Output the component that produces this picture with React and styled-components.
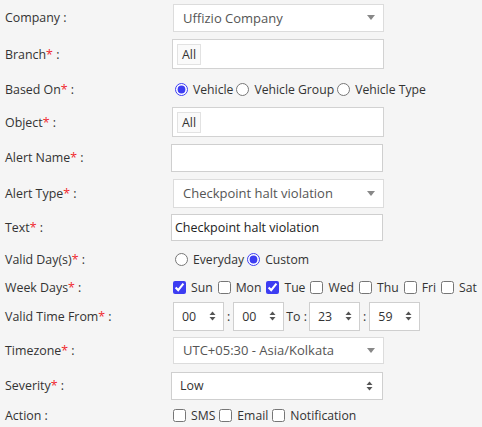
import React from 'react';
import styled, { createGlobalStyle } from 'styled-components';

const GlobalStyle = createGlobalStyle`
  html, body {
    margin: 0;
    padding: 0;
    background: #f5f5f5;
    font-family: "Open Sans", "Noto Sans", sans-serif;
    font-size: 12.4px;
    color: #333;
  }
`;

const Form = styled.div`
  display: flex;
  flex-direction: column;
  padding-left: 5px;
  width: 477px;
`;

const Row = styled.div`
  display: flex;
  align-items: center;
  height: ${p => p.h}px;
`;

const Label = styled.div`
  width: ${p => p.w || 167}px;
  flex-shrink: 0;
  color: #333;
  white-space: nowrap;
`;

const Star = styled.span`
  color: #f0282d;
`;

const Field = styled.div`
  display: flex;
  align-items: center;
  margin-left: ${p => p.ml || 0}px;
`;

const Select2 = styled.div`
  box-sizing: border-box;
  width: 211px;
  height: ${p => p.h || 28}px;
  margin-left: 1px;
  background: #fff;
  border: 1px solid #dcdcdc;
  display: flex;
  align-items: center;
  justify-content: space-between;
  padding: 0 8px 0 9px;
  color: #555;
  font-size: 13px;
`;

const Caret = styled.span`
  width: 0;
  height: 0;
  border-left: 4px solid transparent;
  border-right: 4px solid transparent;
  border-top: 5px solid #888;
`;

const TagBox = styled.div`
  box-sizing: border-box;
  width: 212px;
  height: 30px;
  background: #fff;
  border: 1px solid #d2d2d2;
  display: flex;
  align-items: center;
  padding-left: 4px;
`;

const Tag = styled.span`
  border: 1px solid #e2e2e2;
  background: #fafafa;
  padding: 2px 4px;
  color: #333;
  line-height: 15px;
`;

const TextInput = styled.div`
  box-sizing: border-box;
  width: 212px;
  height: ${p => p.h || 28}px;
  background: #fff;
  border: 1px solid #cfcfcf;
  display: flex;
  align-items: center;
  padding-left: 3px;
  color: #222;
  font-size: 12.5px;
`;

const NativeSelect = styled.div`
  box-sizing: border-box;
  width: ${p => p.w || 212}px;
  height: ${p => p.h || 28}px;
  background: #fff;
  border: 1px solid #cfcfcf;
  display: flex;
  align-items: center;
  justify-content: space-between;
  padding: 0 ${p => p.pr || 7}px 0 8px;
  color: #333;
`;

const Choice = styled.label`
  display: flex;
  align-items: center;
  color: #333;
  font-size: 12.2px;
  margin-right: ${p => p.gap || 4}px;
  white-space: nowrap;

  input {
    margin: 0 5px 0 0;
    width: 13px;
    height: 13px;
    accent-color: #3d3df2;
  }
`;

const Sep = styled.span`
  margin: 0 ${p => p.m}px;
  color: #333;
`;

const Updown = () => (
  <svg width="7" height="10" viewBox="0 0 7 10">
    <path d="M3.5 0.5 L6.5 4 L0.5 4 Z" fill="#555" />
    <path d="M3.5 9.5 L6.5 6 L0.5 6 Z" fill="#555" />
  </svg>
);

const Spinner = ({ value }) => (
  <NativeSelect w={51} h={29} pr={7}>
    <span>{value}</span>
    <Updown />
  </NativeSelect>
);

const req = name => (
  <>
    {name}
    <Star>*</Star> :
  </>
);

export default function App() {
  return (
    <>
      <GlobalStyle />
      <Form>
        <Row h={35}>
          <Label>Company :</Label>
          <Select2>
            <span>Uffizio Company</span>
            <Caret />
          </Select2>
        </Row>
        <Row h={38}>
          <Label>{req('Branch')}</Label>
          <TagBox><Tag>All</Tag></TagBox>
        </Row>
        <Row h={32}>
          <Label>{req('Based On')}</Label>
          <Field ml={3}>
            <Choice gap={3}><input type="radio" name="b" defaultChecked />Vehicle</Choice>
            <Choice gap={3}><input type="radio" name="b" />Vehicle Group</Choice>
            <Choice gap={3}><input type="radio" name="b" />Vehicle Type</Choice>
          </Field>
        </Row>
        <Row h={34}>
          <Label>{req('Object')}</Label>
          <TagBox><Tag>All</Tag></TagBox>
        </Row>
        <Row h={37}>
          <Label w={166}>{req('Alert Name')}</Label>
          <TextInput />
        </Row>
        <Row h={34}>
          <Label>{req('Alert Type')}</Label>
          <Select2 h={29}>
            <span>Checkpoint halt violation</span>
            <Caret />
          </Select2>
        </Row>
        <Row h={35}>
          <Label w={166}>{req('Text')}</Label>
          <TextInput h={27}>Checkpoint halt violation</TextInput>
        </Row>
        <Row h={29}>
          <Label>{req('Valid Day(s)')}</Label>
          <Field ml={3}>
            <Choice gap={3}><input type="radio" name="d" />Everyday</Choice>
            <Choice gap={3}><input type="radio" name="d" defaultChecked />Custom</Choice>
          </Field>
        </Row>
        <Row h={26}>
          <Label>{req('Week Days')}</Label>
          <Field ml={1}>
            {['Sun', 'Mon', 'Tue', 'Wed', 'Thu', 'Fri', 'Sat'].map(d => (
              <Choice key={d} gap={5}>
                <input type="checkbox" defaultChecked={d === 'Sun' || d === 'Tue'} />
                {d}
              </Choice>
            ))}
          </Field>
        </Row>
        <Row h={32}>
          <Label>{req('Valid Time From')}</Label>
          <Field ml={1}>
            <Spinner value="00" />
            <Sep m={3}>:</Sep>
            <Spinner value="00" />
            <Sep m={2}>To :</Sep>
            <Spinner value="23" />
            <Sep m={3}>:</Sep>
            <Spinner value="59" />
          </Field>
        </Row>
        <Row h={36}>
          <Label>{req('Timezone')}</Label>
          <Select2 h={27}>
            <span>UTC+05:30 - Asia/Kolkata</span>
            <Caret />
          </Select2>
        </Row>
        <Row h={35}>
          <Label w={166}>{req('Severity')}</Label>
          <NativeSelect h={28} pr={9}>
            <span>Low</span>
            <Updown />
          </NativeSelect>
        </Row>
        <Row h={24}>
          <Label>Action :</Label>
          <Field ml={1}>
            <Choice gap={4}><input type="checkbox" />SMS</Choice>
            <Choice gap={4}><input type="checkbox" />Email</Choice>
            <Choice gap={4}><input type="checkbox" />Notification</Choice>
          </Field>
        </Row>
      </Form>
    </>
  );
}
